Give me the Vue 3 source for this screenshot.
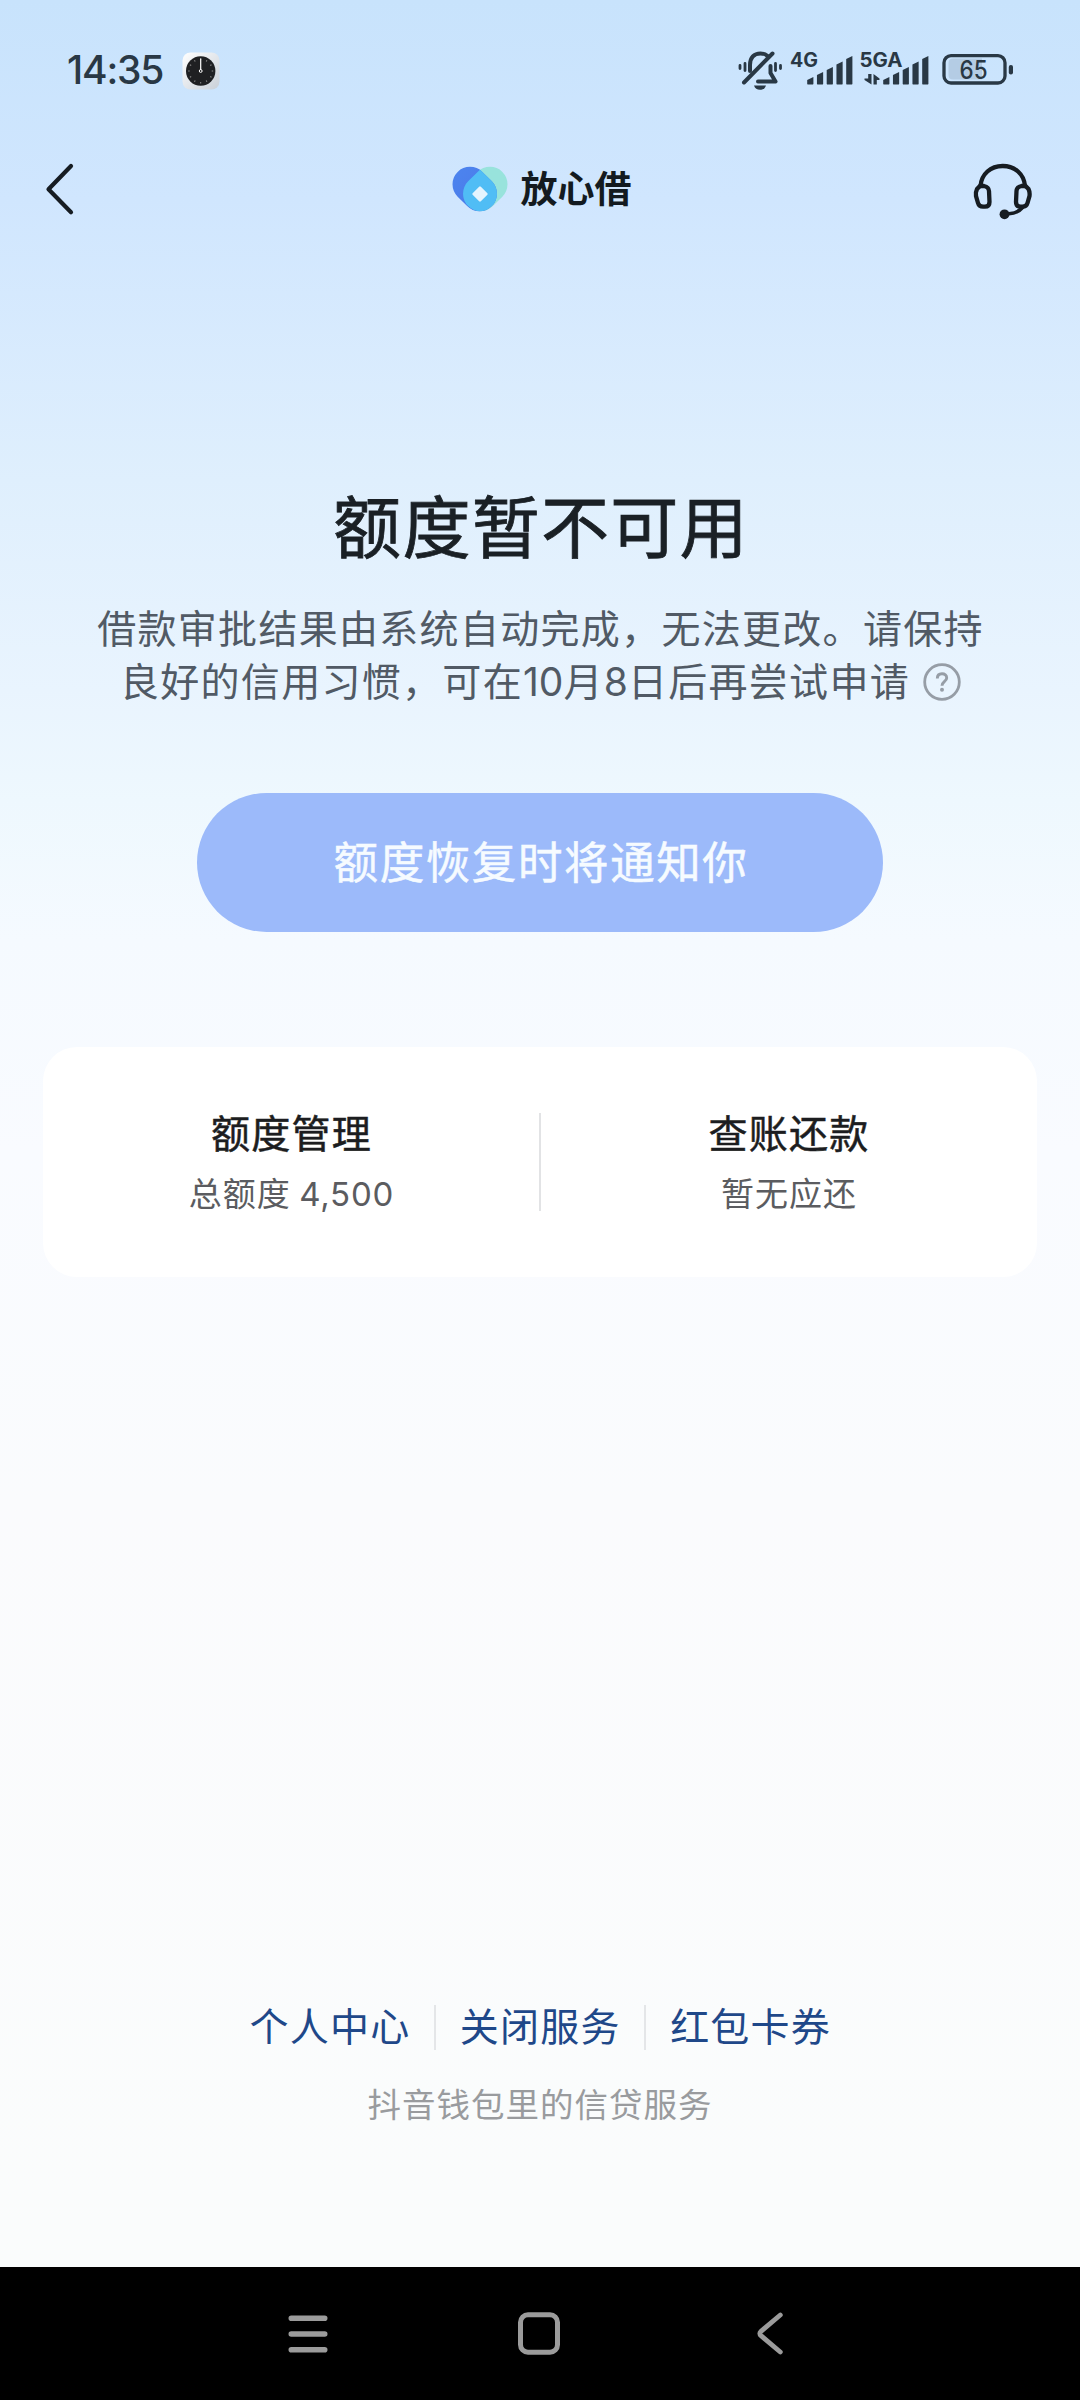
<script setup>
const signalBars = [7.5, 12.5, 17.5, 23, 28.5]
const ticks = Array.from({ length: 12 }, (_, i) => i * 30)
const stats = [
  { title: '额度管理', label: '总额度 ', amount: '4,500' },
  { title: '查账还款', label: '暂无应还', amount: '' },
]
const links = ['个人中心', '关闭服务', '红包卡券']
</script>

<template>
  <div class="screen">
    <div class="status">
      <span class="time">14:35</span>
      <svg class="clock" width="38" height="38" viewBox="0 0 38 38">
        <defs>
          <linearGradient id="face" x1="0" y1="0" x2="1" y2="1">
            <stop offset="0" stop-color="#fff" />
            <stop offset="1" stop-color="#c9d0d8" />
          </linearGradient>
        </defs>
        <rect x="0.5" y="0.5" width="37" height="37" rx="8" fill="url(#face)" />
        <circle cx="18.7" cy="19" r="14.7" fill="#1f2022" />
        <line
          v-for="t in ticks" :key="t" x1="18.7" y1="6.5" x2="18.7" y2="8"
          stroke="#8b8b8b" stroke-width="1" :transform="`rotate(${t} 18.7 19)`"
        />
        <path d="M18.7 6.5V18" stroke="#fff" stroke-width="1.2" />
        <circle cx="18.7" cy="19" r="1.4" fill="none" stroke="#fff" stroke-width="1" />
      </svg>
      <svg class="indicators" width="280" height="50" viewBox="735 45 280 50">
        <g fill="none" stroke="#293845" stroke-width="4" stroke-linecap="round" stroke-linejoin="round">
          <path d="M750 71V65C750 57.500 754 53.500 760.500 53.500C763.500 53.500 766 54.500 767.500 56" />
          <path d="M770.500 66V73L775.500 81.500H758" />
          <path d="M772.500 53.500L744 82.500" />
          <path d="M745 63.500V70.500M740 65.500V68.500M775.500 63.500V70.500M780.500 65.500V68.500" stroke-width="2.800" />
        </g>
        <path d="M754 85.500H766C765 88.500 763 89.800 760 89.800S755 88.500 754 85.500Z" fill="#293845" />
        <g fill="#293845">
          <text x="790" y="67" class="net" textLength="28" lengthAdjust="spacingAndGlyphs">4G</text>
          <text x="859.500" y="67" class="net" textLength="43" lengthAdjust="spacingAndGlyphs">5GA</text>
          <path
            v-for="(h, i) in signalBars" :key="'a' + i"
            :d="`M${807.2 + i * 9.75} ${84.6 - h + 3}l6.200 -3v${h - 1.2}q0 1.200 -1.200 1.200h-3.800q-1.200 0 -1.200 -1.200z`"
          />
          <path
            v-for="(h, i) in signalBars" :key="'b' + i"
            :d="`M${883.2 + i * 9.75} ${84.6 - h + 3}l6.200 -3v${h - 1.2}q0 1.200 -1.200 1.200h-3.800q-1.200 0 -1.200 -1.200z`"
          />
          <path d="M868.200 74H871.500V84.500L864.500 80V78.500H868.200ZM873.500 84.500V74L879.500 78.500V80H876.800V84.500Z" />
          <rect x="1008.800" y="65" width="4.200" height="9.500" rx="2" />
        </g>
        <path d="M953 58.500H982V79.500H953Q948.500 79.500 948.500 75V63Q948.500 58.500 953 58.500Z" fill="#b4cce4" />
        <rect x="944" y="55.700" width="61" height="27.300" rx="7" fill="none" stroke="#293845" stroke-width="3.300" />
        <text x="959.500" y="78.700" class="level" textLength="28" lengthAdjust="spacingAndGlyphs">65</text>
      </svg>
    </div>

    <header class="header">
      <svg width="30" height="56" viewBox="0 0 30 56">
        <path d="M27 5L4.500 28.300L27 51.300" fill="none" stroke="#161c22" stroke-width="4.200" stroke-linecap="round" stroke-linejoin="round" />
      </svg>
      <div class="brand">
        <svg width="58" height="46" viewBox="451 167 58 46">
          <defs>
            <clipPath id="leftLobe">
              <rect x="450.550" y="172.500" width="48.400" height="35" rx="17.500" transform="rotate(45 474.750 190)" />
            </clipPath>
            <linearGradient id="blue" x1="0" y1="0" x2="1" y2="0">
              <stop offset="0" stop-color="#4c83ee" />
              <stop offset="1" stop-color="#4b79e8" />
            </linearGradient>
          </defs>
          <rect x="461.050" y="172.500" width="48.400" height="35" rx="17.500" transform="rotate(-45 485.250 190)" fill="#98e3dc" />
          <rect x="450.550" y="172.500" width="48.400" height="35" rx="17.500" transform="rotate(45 474.750 190)" fill="url(#blue)" />
          <g clip-path="url(#leftLobe)">
            <rect x="461.050" y="172.500" width="48.400" height="35" rx="17.500" transform="rotate(-45 485.250 190)" fill="#50bdf5" />
          </g>
          <rect x="474.200" y="189.200" width="11.600" height="11.600" rx="1.200" transform="rotate(45 480 195)" fill="#e4f4fe" />
        </svg>
        <span class="name">放心借</span>
      </div>
      <svg width="62" height="60" viewBox="971 160 62 60">
        <g fill="none" stroke="#161c22" stroke-width="4.300" stroke-linecap="round">
          <path d="M980.500 186C981.500 174 990.500 166 1002.700 166S1024 174 1025 186" />
          <path d="M980 186H984Q988.800 187 989 191L989.500 202Q989.500 206.700 985 206.700H983Q979 206.700 978 203L976 196Q975.500 192 977 189Z" />
          <path d="M1025.500 186H1021.500Q1016.700 187 1016.500 191L1016 202Q1016 206.700 1020.500 206.700H1022.500Q1026.500 206.700 1027.500 203L1029.500 196Q1030 192 1028.500 189Z" />
          <path d="M1022.500 207.500Q1018 213 1009 213.800" stroke-width="3.600" />
        </g>
        <circle cx="1004.500" cy="214.300" r="4.900" fill="#161c22" />
      </svg>
    </header>

    <main class="main">
      <h1 class="title">额度暂不可用</h1>
      <p class="desc">
        借款审批结果由系统自动完成，无法更改。请保持<br>良好的信用习惯，可在<span class="num">10</span>月<span class="num">8</span>日后再尝试申请<svg class="help" width="38" height="38" viewBox="0 0 38 38">
          <circle cx="19" cy="19" r="17.300" fill="none" stroke="#969da6" stroke-width="2.800" />
          <path d="M14.300 15.500C14.300 12.300 16.300 10.700 19 10.700S23.700 12.300 23.700 15C23.700 18.300 19 18.500 19 22.700" fill="none" stroke="#969da6" stroke-width="2.900" />
          <circle cx="19" cy="26.800" r="2" fill="#969da6" />
        </svg>
      </p>
      <button class="notify">额度恢复时将通知你</button>
      <section class="card">
        <div v-for="s in stats" :key="s.title" class="cell">
          <div class="cell-title">{{ s.title }}</div>
          <div class="cell-sub">{{ s.label }}<span v-if="s.amount" class="amount">{{ s.amount }}</span></div>
        </div>
      </section>
    </main>

    <footer class="footer">
      <div class="links">
        <a v-for="l in links" :key="l" class="link">{{ l }}</a>
      </div>
      <div class="note">抖音钱包里的信贷服务</div>
    </footer>

    <nav class="nav">
      <svg width="40" height="38" viewBox="0 0 40 38">
        <path d="M3.300 3.300H36.700M3.300 19H36.700M3.300 34.700H36.700" stroke="#9b9b9b" stroke-width="5.600" stroke-linecap="round" />
      </svg>
      <svg width="42" height="43" viewBox="0 0 42 43">
        <rect x="2.500" y="2.800" width="37" height="37.400" rx="7.500" fill="none" stroke="#9b9b9b" stroke-width="5" />
      </svg>
      <svg width="28" height="43" viewBox="0 0 28 43">
        <path d="M24.300 3L5 19.300Q2.600 21.500 5 23.700L24.300 40" fill="none" stroke="#9b9b9b" stroke-width="4.800" stroke-linecap="round" />
      </svg>
    </nav>
  </div>
</template>

<style>
body {
  margin: 0;
}
</style>

<style scoped>
.screen {
  width: 1080px;
  height: 2400px;
  display: flex;
  flex-direction: column;
  overflow: hidden;
  font-family: "Noto Sans CJK SC", sans-serif;
  background: linear-gradient(180deg, #c8e3fc 0, #d0e6fe 200px, #dfeffd 480px, #e9f4fe 690px, #eef8fe 800px, #f5faff 940px, #f9fbff 1150px, #fafbfd 1500px, #fafcfc 2200px);
}
.status {
  height: 140px;
  display: flex;
  align-items: center;
  padding: 0 65px 0 67px;
  box-sizing: border-box;
}
.time {
  width: 115px;
  font: 500 39px/40px Inter, sans-serif;
  letter-spacing: -1.200px;
  color: #293845;
}
.clock {
  margin-top: 1px;
}
.indicators {
  margin-left: auto;
}
.net {
  font: 700 19.500px Inter, sans-serif;
}
.level {
  font: 500 25px Inter, sans-serif;
  fill: #293845;
}
.header {
  height: 98px;
  display: grid;
  grid-template-columns: 1fr auto 1fr;
  align-items: center;
  padding: 0 47px 0 44px;
}
.header > :last-child {
  justify-self: end;
  margin-top: 2px;
}
.brand {
  display: flex;
  align-items: center;
  gap: 12px;
  margin-left: 5px;
  color: #131a20;
}
.name {
  margin-top: -4px;
  font-size: 37px;
  line-height: 40px;
  font-weight: 700;
}
.main {
  display: flex;
  flex-direction: column;
  align-items: center;
}
.title {
  margin: 236px 0 0;
  padding-left: 2px;
  font-size: 68px;
  line-height: 100px;
  font-weight: 400;
  letter-spacing: 1.300px;
  color: #1a2025;
  -webkit-text-stroke: 0.8px #1a2025;
}
.desc {
  margin: 26px 0 0;
  padding-left: 1px;
  font-size: 39px;
  line-height: 53px;
  letter-spacing: 1.300px;
  text-align: center;
  white-space: nowrap;
  color: #515a65;
}
.num {
  font-family: Inter, sans-serif;
  letter-spacing: 0;
}
.help {
  margin-left: 13px;
  vertical-align: -5px;
}
.notify {
  width: 686px;
  height: 139px;
  margin-top: 85px;
  padding: 0 0 5px 2px;
  border: 0;
  border-radius: 70px;
  background: #9cbafa;
  color: #f6fbff;
  font: 400 44.500px/134px "Noto Sans CJK SC", sans-serif;
  letter-spacing: 1.600px;
  -webkit-text-stroke: 0.5px #f6fbff;
}
.card {
  width: 994px;
  height: 230px;
  margin-top: 115px;
  border-radius: 34px;
  background: #fff;
  display: grid;
  grid-template-columns: 1fr 1fr;
  align-items: center;
}
.cell {
  height: 98px;
  text-align: center;
}
.cell + .cell {
  border-left: 2px solid #e2e3e5;
  margin-left: -1px;
}
.cell-title {
  margin-top: -12px;
  font-size: 39px;
  line-height: 60px;
  letter-spacing: 1.200px;
  color: #1c1d20;
  -webkit-text-stroke: 0.5px #1c1d20;
}
.cell-sub {
  margin-top: 1px;
  font-size: 33px;
  line-height: 60px;
  letter-spacing: 1px;
  color: #5b5c60;
}
.amount {
  font-family: Inter, sans-serif;
  letter-spacing: 0.8px;
}
.footer {
  margin-top: auto;
  height: 267px;
  display: flex;
  flex-direction: column;
  align-items: center;
}
.links {
  display: flex;
  height: 45px;
  margin-top: 5px;
}
.link {
  padding: 0 23.500px 0 24px;
  font-size: 39px;
  line-height: 39px;
  letter-spacing: 1.200px;
  color: #1f4889;
}
.link + .link {
  border-left: 2px solid #e4e6e8;
}
.note {
  margin-top: 29px;
  font-size: 33.500px;
  line-height: 48px;
  letter-spacing: 1px;
  color: #999b9e;
}
.nav {
  height: 133px;
  flex: none;
  display: grid;
  grid-template-columns: 40px 42px 28px;
  align-items: center;
  column-gap: 190px;
  padding-left: 288px;
  box-sizing: border-box;
  background: #000;
}
.nav > :last-child {
  margin-left: 6px;
}
</style>
